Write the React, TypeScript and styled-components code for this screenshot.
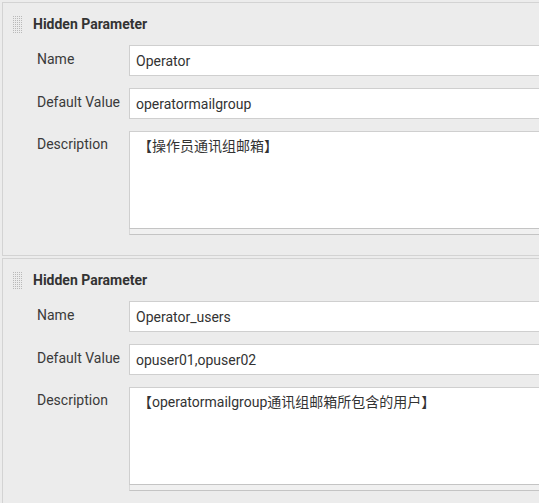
import React from "react";
import styled, { createGlobalStyle } from "styled-components";

const Global = createGlobalStyle`
  html, body { margin: 0; padding: 0; background: #ececec; overflow: hidden; }
  body { font-family: Roboto, "Noto Sans CJK SC", sans-serif; font-size: 14px; color: #333; }
`;

const Page = styled.div`
  box-sizing: border-box;
  width: 100%;
  padding: 2px 0 0 2px;
  display: flex;
  flex-direction: column;
  gap: 2px;
`;

const Panel = styled.section`
  background: #ececec;
  border-top: 1px solid #d3d3d3;
  border-left: 1px solid #d3d3d3;
  border-bottom: 1px solid #d3d3d3;
  padding: 11px 0 20px 10px;
`;

const Header = styled.div`
  display: flex;
  align-items: center;
  gap: 11px;
  height: 20px;
  margin-bottom: 11px;
`;

const GripSvg = styled.svg`
  display: block;
  flex: none;
`;

const Title = styled.div`
  font-weight: 700;
  font-size: 14px;
  color: #333;
  line-height: 20px;
`;

const Fields = styled.div`
  display: grid;
  grid-template-columns: 92px 1fr;
  row-gap: 12px;
  padding-left: 24px;
`;

const Label = styled.div<{ $top?: boolean }>`
  font-size: 14px;
  color: #3a3a3a;
  line-height: 20px;
  padding-top: ${(p) => (p.$top ? "3px" : "4px")};
`;

const Input = styled.div`
  box-sizing: border-box;
  height: 31px;
  background: #fff;
  border: 1px solid #cfcfcf;
  border-right: none;
  padding: 0 6px;
  display: flex;
  align-items: center;
  font-size: 14px;
  color: #333;
  white-space: nowrap;
`;

const AreaWrap = styled.div`
  display: flex;
  flex-direction: column;
`;

const TextArea = styled.div`
  box-sizing: border-box;
  height: 98px;
  background: #fff;
  border: 1px solid #cfcfcf;
  border-right: none;
  border-bottom-color: #c4c4c4;
  padding: 4px 8px;
  font-size: 14px;
  line-height: 20px;
  color: #333;
  white-space: nowrap;
`;

const Strip = styled.div`
  height: 5px;
  border-left: 1px solid #d8d8d8;
  border-bottom: 1px solid #c4c4c4;
  background: #f0f0f0;
`;

function Grip() {
  const dots: React.ReactNode[] = [];
  for (let r = 0; r < 9; r++) {
    for (let c = 0; c < 5; c++) {
      dots.push(<rect key={`${r}-${c}`} x={c * 2} y={r * 2} width={1} height={1} fill="#b9b9b9" />);
    }
  }
  return (
    <GripSvg width="9" height="17" viewBox="0 0 9 17">
      {dots}
    </GripSvg>
  );
}

type Param = { name: string; value: string; desc: string };

const params: Param[] = [
  { name: "Operator", value: "operatormailgroup", desc: "【操作员通讯组邮箱】" },
  { name: "Operator_users", value: "opuser01,opuser02", desc: "【operatormailgroup通讯组邮箱所包含的用户】" },
];

export default function App() {
  return (
    <>
      <Global />
      <Page>
        {params.map((p) => (
          <Panel key={p.name}>
            <Header>
              <Grip />
              <Title>Hidden Parameter</Title>
            </Header>
            <Fields>
              <Label>Name</Label>
              <Input>{p.name}</Input>
              <Label>Default Value</Label>
              <Input>{p.value}</Input>
              <Label $top>Description</Label>
              <AreaWrap>
                <TextArea>{p.desc}</TextArea>
                <Strip />
              </AreaWrap>
            </Fields>
          </Panel>
        ))}
      </Page>
    </>
  );
}
